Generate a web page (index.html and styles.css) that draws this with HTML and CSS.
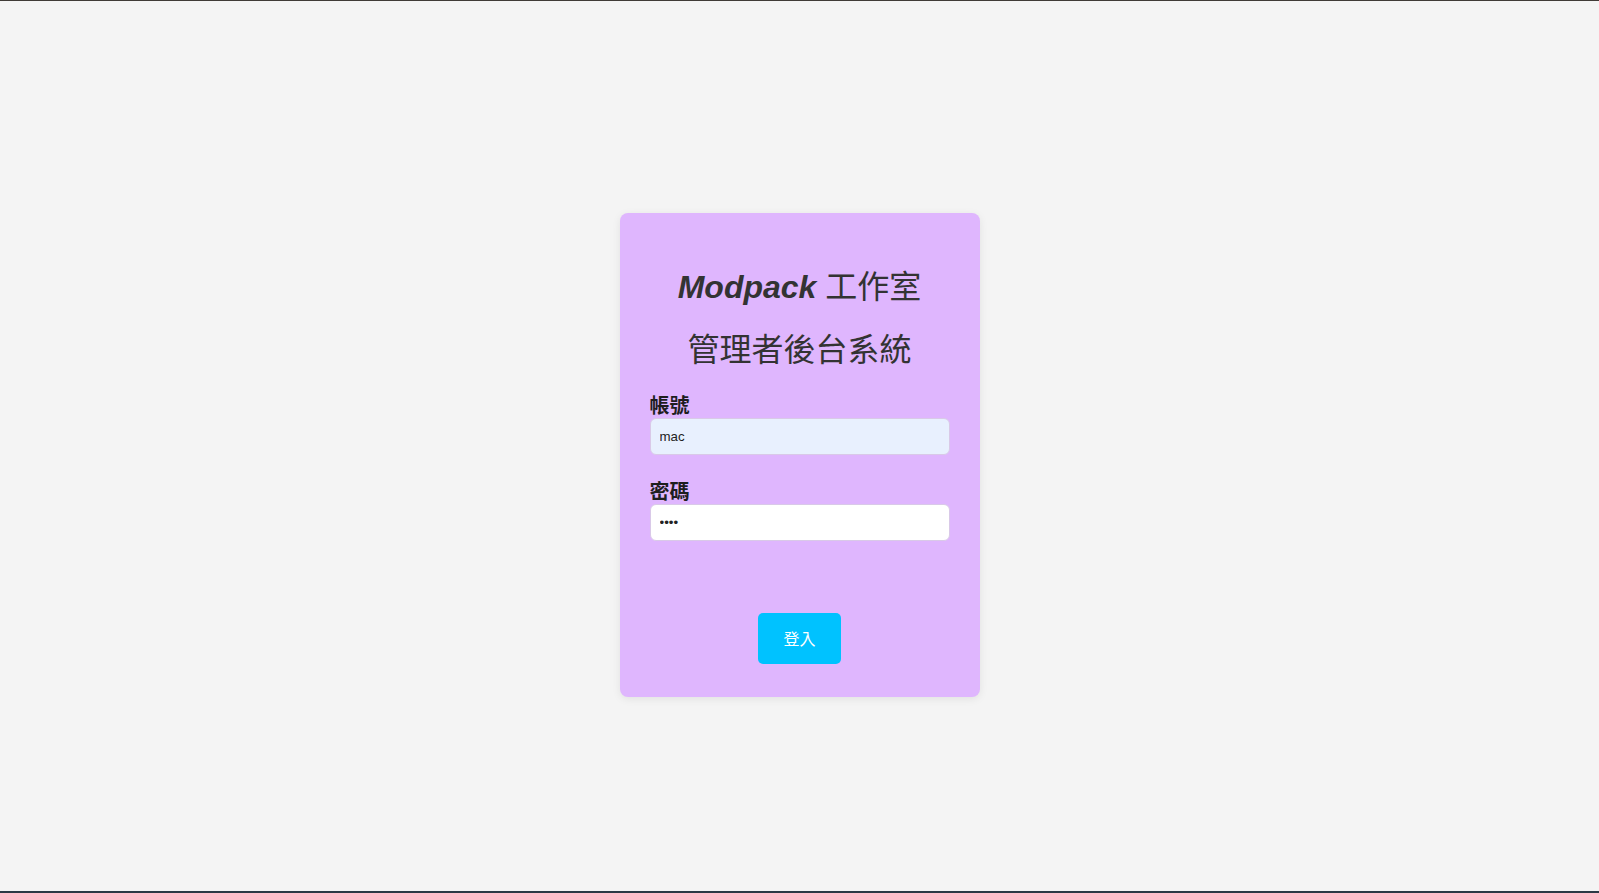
FILE: index.html
```html
<!DOCTYPE html>
<html lang="zh-Hant">
<head>
<meta charset="utf-8">
<title>Modpack 工作室 管理者後台系統</title>
<link rel="stylesheet" href="styles.css">
</head>
<body>
<div class="page">
  <form class="card" onsubmit="return false;">
    <h1 class="title"><em class="brand">Modpack</em> 工作室</h1>
    <h2 class="title title-sub">管理者後台系統</h2>
    <div class="field">
      <label class="label" for="account">帳號</label>
      <input class="input input-filled" id="account" type="text" value="mac">
    </div>
    <div class="field">
      <label class="label" for="password">密碼</label>
      <input class="input" id="password" type="password" value="1234">
    </div>
    <div class="actions">
      <button class="btn" type="submit">登入</button>
    </div>
  </form>
</div>
</body>
</html>
```
FILE: styles.css
```css
html, body {
  margin: 0;
  padding: 0;
}
body {
  background: #f4f4f4;
  font-family: "Liberation Sans", "Noto Sans CJK TC", sans-serif;
  color: #333;
}
.page {
  height: 100vh;
  box-sizing: border-box;
  border-top: 1px solid #403b37;
  border-bottom: 2px solid #2d3a45;
  padding-top: 18px;
  display: flex;
  align-items: center;
  justify-content: center;
}
.card {
  width: 300px;
  padding: 32px 30px 33px;
  background: #dfb6fe;
  border-radius: 8px;
  box-shadow: 0 2px 8px rgba(0, 0, 0, 0.08);
}
.title {
  margin: 22px 0 0;
  font-size: 32px;
  line-height: 40px;
  font-weight: normal;
  text-align: center;
  color: #333;
}
.title-sub {
  margin-top: 23px;
  margin-bottom: 0;
}
.brand {
  font-style: italic;
  font-weight: bold;
}
.field {
  margin-top: 24px;
}
.field + .field {
  margin-top: 25px;
}
.label {
  display: block;
  font-size: 20px;
  line-height: 24px;
  font-weight: bold;
  color: #1e1e1e;
  margin-bottom: 0;
}
.input {
  display: block;
  width: 100%;
  box-sizing: border-box;
  height: 37px;
  padding: 0 9px;
  border: 1px solid #d9c9e8;
  border-radius: 6px;
  background: #fff;
  font-family: "Liberation Sans", "Noto Sans CJK TC", sans-serif;
  font-size: 13.3px;
  color: #222;
  outline: none;
}
.input-filled {
  background: #e8f0fe;
}
.actions {
  margin-top: 72px;
  display: flex;
  justify-content: center;
}
.btn {
  padding: 15px 25px;
  border: none;
  border-radius: 5px;
  background: #00c2ff;
  color: #fff;
  font-family: "Noto Sans CJK TC", sans-serif;
  font-size: 16px;
  line-height: 21px;
  cursor: pointer;
}
```
